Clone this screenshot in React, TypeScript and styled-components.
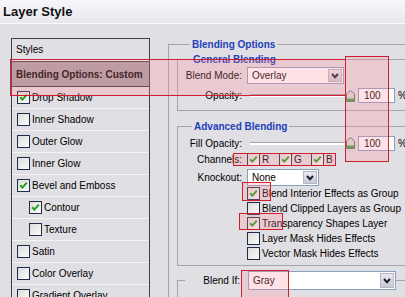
import React from "react";
import styled, { createGlobalStyle } from "styled-components";

type StyleItem = { label: string; checked?: boolean; level?: number };

const STYLE_ITEMS: StyleItem[] = [
  { label: "Drop Shadow", checked: true },
  { label: "Inner Shadow" },
  { label: "Outer Glow" },
  { label: "Inner Glow" },
  { label: "Bevel and Emboss", checked: true },
  { label: "Contour", checked: true, level: 1 },
  { label: "Texture", level: 1 },
  { label: "Satin" },
  { label: "Color Overlay" },
  { label: "Gradient Overlay" },
];

const ADVANCED_OPTIONS = [
  { label: "Blend Interior Effects as Group", checked: true },
  { label: "Blend Clipped Layers as Group" },
  { label: "Transparency Shapes Layer", checked: true },
  { label: "Layer Mask Hides Effects" },
  { label: "Vector Mask Hides Effects" },
];

// red annotation boxes drawn over the dialog
const HIGHLIGHTS = [
  { x: 10, y: 59, w: 336, h: 37 },
  { x: 345, y: 56, w: 44, h: 106 },
  { x: 233, y: 153, w: 103, h: 13 },
  { x: 242, y: 182, w: 29, h: 19 },
  { x: 239, y: 213, w: 44, h: 17 },
  { x: 241, y: 270, w: 48, h: 30 },
];

const CheckMark = () => (
  <svg width="9" height="9" viewBox="0 0 9 9">
    <path d="M1.2 4.2 L3.4 6.6 L7.8 1.6" stroke="#21a121" strokeWidth="2" fill="none" />
  </svg>
);

const Chevron = () => (
  <svg width="8" height="6" viewBox="0 0 8 6">
    <path d="M1 1 L4 4.2 L7 1" stroke="#1e1e28" strokeWidth="2" fill="none" />
  </svg>
);

const Thumb = () => (
  <svg width="9" height="12" viewBox="0 0 9 12">
    <path d="M0.5 4 L4.5 0.5 L8.5 4 L8.5 11.5 L0.5 11.5 Z" fill="#dadada" stroke="#6c6c6c" />
    <rect x="1" y="8.5" width="7" height="2.5" fill="#39a83c" />
  </svg>
);

const Checkbox: React.FC<{ checked?: boolean }> = ({ checked }) => (
  <Box>{checked && <CheckMark />}</Box>
);

const Select: React.FC<{ value: string; width: number; height: number }> = ({
  value,
  width,
  height,
}) => (
  <SelectBox $w={width} $h={height}>
    <SelectText>{value}</SelectText>
    <SelectButton>
      <Chevron />
    </SelectButton>
  </SelectBox>
);

const Slider: React.FC<{ value: number }> = ({ value }) => (
  <SliderRow>
    <SliderArea>
      <Track />
      <Thumb />
    </SliderArea>
    <NumberInput>{value}</NumberInput>
    <Percent>%</Percent>
  </SliderRow>
);

export default function App() {
  return (
    <>
      <GlobalStyle />
      <Window>
        <TitleBar>Layer Style</TitleBar>
        <Body>
          <StylesList>
            <HeaderRow>Styles</HeaderRow>
            <SelectedRow>Blending Options: Custom</SelectedRow>
            {STYLE_ITEMS.map(item => (
              <ItemRow key={item.label} $level={item.level ?? 0}>
                <Checkbox checked={item.checked} />
                <span>{item.label}</span>
              </ItemRow>
            ))}
          </StylesList>

          <RightPane>
            <OuterGroup>
              <Legend $offset={13}>Blending Options</Legend>

              <GeneralGroup>
                <Legend $offset={13}>General Blending</Legend>
                <FormRow $h={17}>
                  <Label>Blend Mode:</Label>
                  <Select value="Overlay" width={97} height={17} />
                </FormRow>
                <FormRow $h={15} $mt={4}>
                  <Label>Opacity:</Label>
                  <Slider value={100} />
                </FormRow>
              </GeneralGroup>

              <AdvancedGroup>
                <Legend $offset={14}>Advanced Blending</Legend>
                <FormRow $h={16}>
                  <Label>Fill Opacity:</Label>
                  <Slider value={100} />
                </FormRow>
                <FormRow $h={15} $mt={1}>
                  <Label>Channels:</Label>
                  {["R", "G", "B"].map(ch => (
                    <Channel key={ch}>
                      <Checkbox checked />
                      <span>{ch}</span>
                    </Channel>
                  ))}
                </FormRow>
                <FormRow $h={17} $mt={2}>
                  <Label>Knockout:</Label>
                  <Select value="None" width={72} height={17} />
                </FormRow>
                {ADVANCED_OPTIONS.map(opt => (
                  <OptionRow key={opt.label}>
                    <Checkbox checked={opt.checked} />
                    <span>{opt.label}</span>
                  </OptionRow>
                ))}
              </AdvancedGroup>

              <BlendIfGroup>
                <BlendIfLegend>
                  <BlendIfLabel>Blend If:</BlendIfLabel>
                  <Select value="Gray" width={148} height={19} />
                </BlendIfLegend>
                <BlendIfSpace />
              </BlendIfGroup>
            </OuterGroup>
          </RightPane>
        </Body>

        {HIGHLIGHTS.map((h, i) => (
          <Highlight key={i} $x={h.x} $y={h.y} $w={h.w} $h={h.h} />
        ))}
      </Window>
    </>
  );
}

const GlobalStyle = createGlobalStyle`
  html, body {
    margin: 0;
    padding: 0;
    background: #e0dfe3;
  }
  body {
    font-family: "Liberation Sans", Arial, sans-serif;
    font-size: 10px;
    color: #000;
  }
`;

const Window = styled.div`
  position: relative;
  width: 405px;
  height: 297px;
  overflow: hidden;
  background: #e0dfe3;
`;

const TitleBar = styled.div`
  height: 23px;
  padding-left: 3px;
  display: flex;
  align-items: center;
  border-bottom: 1px solid #fafafc;
  background: linear-gradient(#f7f7fa, #e8e7ed);
  font-size: 13px;
  font-weight: bold;
  color: #111;
`;

const Body = styled.div`
  display: flex;
  align-items: flex-start;
  gap: 18px;
  padding: 14px 0 0 11px;
`;

const StylesList = styled.div`
  width: 139px;
  height: 300px;
  flex-shrink: 0;
  box-sizing: border-box;
  border: 1px solid #3e3e44;
`;

const HeaderRow = styled.div`
  height: 21px;
  padding-left: 4px;
  display: flex;
  align-items: center;
  border-bottom: 1px solid #f6f6f8;
`;

const SelectedRow = styled.div`
  height: 24px;
  padding-left: 4px;
  display: flex;
  align-items: center;
  border-top: 1px solid #3a3a40;
  border-bottom: 1px solid #3a3a40;
  background: #a9a2a6;
  font-weight: bold;
`;

const ItemRow = styled.div<{ $level: number }>`
  height: 21px;
  padding-left: ${p => 5 + p.$level * 12}px;
  display: flex;
  align-items: center;
  gap: 2px;
  border-bottom: 1px solid #f4f4f6;
`;

const Box = styled.span`
  width: 13px;
  height: 13px;
  flex-shrink: 0;
  box-sizing: border-box;
  border: 1px solid #1f2c4c;
  background: linear-gradient(135deg, #dcdcd8, #fbfbfb);
  display: inline-flex;
  align-items: center;
  justify-content: center;
`;

const RightPane = styled.div`
  width: 250px;
  flex-shrink: 0;
`;

const Group = styled.fieldset`
  margin: 0;
  padding: 0;
  min-width: 0;
  border: 1px solid #a4a3a9;
`;

const OuterGroup = styled(Group)`
  height: 300px;
  padding-left: 8px;
  box-sizing: border-box;
`;

const GeneralGroup = styled(Group)`
  margin-top: 2px;
  padding: 1px 0 7px;
`;

const AdvancedGroup = styled(Group)`
  margin-top: 9px;
  padding: 2px 0 4px;
`;

const BlendIfGroup = styled(Group)`
  margin-top: 5px;
`;

const Legend = styled.legend<{ $offset: number }>`
  margin-left: ${p => p.$offset}px;
  padding: 0 2px;
  line-height: 13px;
  font-weight: bold;
  color: #1d41b9;
`;

const BlendIfLegend = styled.legend`
  margin-left: 7px;
  padding: 0;
  display: flex;
  align-items: center;
  gap: 8px;
`;

const BlendIfLabel = styled.span`
  width: 55px;
  text-align: right;
`;

const BlendIfSpace = styled.div`
  height: 40px;
`;

const FormRow = styled.div<{ $h: number; $mt?: number }>`
  height: ${p => p.$h}px;
  margin-top: ${p => p.$mt ?? 0}px;
  display: flex;
  align-items: center;
`;

const Label = styled.span`
  width: 64px;
  margin-right: 5px;
  flex-shrink: 0;
  text-align: right;
  white-space: nowrap;
`;

const Channel = styled.span`
  width: 32px;
  display: flex;
  align-items: center;
  gap: 2px;
`;

const OptionRow = styled.div`
  height: 15px;
  padding-left: 69px;
  display: flex;
  align-items: center;
  gap: 2px;
  white-space: nowrap;
`;

const SelectBox = styled.div<{ $w: number; $h: number }>`
  width: ${p => p.$w}px;
  height: ${p => p.$h}px;
  box-sizing: border-box;
  border: 1px solid #8b9fbb;
  background: #fff;
  display: flex;
  align-items: center;
  padding-left: 4px;
`;

const SelectText = styled.span`
  flex: 1;
`;

const SelectButton = styled.span`
  width: 14px;
  height: calc(100% - 2px);
  margin-right: 1px;
  box-sizing: border-box;
  border: 1px solid #b7b6c4;
  background: linear-gradient(#ebeaf1, #c9c8d6);
  display: flex;
  align-items: center;
  justify-content: center;
`;

const SliderRow = styled.div`
  display: flex;
  align-items: center;
`;

const SliderArea = styled.div`
  width: 108px;
  display: flex;
  align-items: center;
  padding-left: 3px;
  box-sizing: border-box;
`;

const Track = styled.div`
  flex: 1;
  height: 2px;
  margin-right: -1px;
  border-top: 1px solid #a5a5aa;
  background: #fff;
`;

const NumberInput = styled.div`
  width: 37px;
  height: 15px;
  margin-left: 3px;
  padding-left: 5px;
  box-sizing: border-box;
  border: 1px solid #8b9fbb;
  background: #fff;
  display: flex;
  align-items: center;
`;

const Percent = styled.span`
  margin-left: 3px;
`;

const Highlight = styled.div<{ $x: number; $y: number; $w: number; $h: number }>`
  position: absolute;
  left: ${p => p.$x}px;
  top: ${p => p.$y}px;
  width: ${p => p.$w}px;
  height: ${p => p.$h}px;
  box-sizing: border-box;
  border: 1px solid #cf1f2e;
  background: rgba(255, 140, 150, 0.25);
  pointer-events: none;
`;
